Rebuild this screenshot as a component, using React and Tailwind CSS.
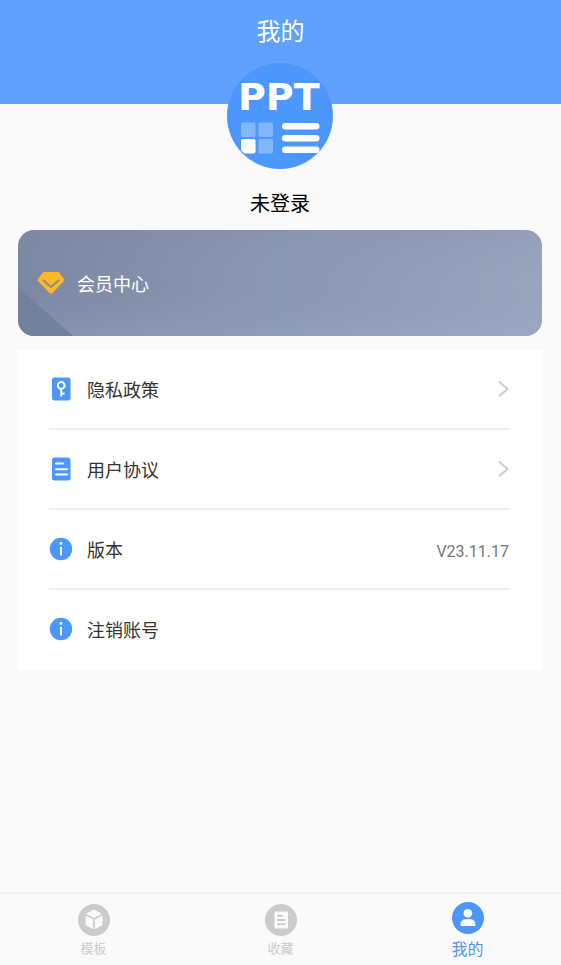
const menuItems = [
    { id: 'privacy', label: '隐私政策', icon: KeyIcon, arrow: true },
    { id: 'agreement', label: '用户协议', icon: DocIcon, arrow: true },
    { id: 'version', label: '版本', icon: InfoIcon, value: 'V23.11.17' },
    { id: 'cancel', label: '注销账号', icon: InfoIcon },
];

const tabs = [
    { id: 'template', label: '模板', icon: CubeIcon },
    { id: 'favorite', label: '收藏', icon: ListIcon },
    { id: 'mine', label: '我的', icon: UserIcon, active: true },
];

function AvatarLogo() {
    return (
        <svg className="w-[106px] h-[106px]" viewBox="0 0 106 106" fill="#fff" role="img" aria-label="PPT">
            <circle cx="53" cy="53" r="53" fill="#4c97fe" />
            <text x="11" y="47" fontSize="38" fontWeight="700" fontFamily="'DejaVu Sans', sans-serif">PPT</text>
            <rect x="14" y="59.500" width="14.500" height="14.500" rx="2" opacity=".3" />
            <rect x="31.500" y="59.500" width="14.500" height="14.500" rx="2" opacity=".3" />
            <path d="M16 76h10.500a2 2 0 0 1 2 2v10.500a2 2 0 0 1-2 2H17.500L14 87.500V78a2 2 0 0 1 2-2z" />
            <rect x="31.500" y="76" width="14.500" height="14.500" rx="2" opacity=".3" />
            <rect x="55" y="60" width="37.500" height="6.500" rx="3.250" />
            <rect x="55" y="72" width="37.500" height="6.500" rx="3.250" />
            <rect x="55" y="83.500" width="37.500" height="6.500" rx="3.250" />
        </svg>
    );
}

function DiamondIcon() {
    return (
        <svg className="w-[26px] h-[22px]" viewBox="0 0 26 22" fill="none" aria-hidden="true">
            <path d="M6.500 2.500h13l4 5.500L13 19 2.500 8z" fill="#fdb827" stroke="#fdb827" strokeWidth="5" strokeLinejoin="round" />
            <path d="M5.500 8.500l7.500 6.500 7.500-6.500" stroke="#8c8c8a" strokeWidth="2" strokeLinecap="round" strokeLinejoin="round" />
        </svg>
    );
}

function KeyIcon() {
    return (
        <svg className="w-6 h-6" viewBox="0 0 24 24" fill="none" stroke="#fff" aria-hidden="true">
            <rect x="3" y=".5" width="18.500" height="23" rx="2.500" fill="#4c97fe" stroke="none" />
            <circle cx="12.200" cy="8.500" r="3.400" strokeWidth="2" />
            <path d="M12.200 12v7.500M12.200 16.500h3.400" strokeWidth="2" />
        </svg>
    );
}

function DocIcon() {
    return (
        <svg className="w-6 h-6" viewBox="0 0 24 24" fill="none" aria-hidden="true">
            <rect x="3" y=".5" width="18.500" height="23" rx="2.500" fill="#4c97fe" />
            <path d="M7 6.500h7M7 12.200h11M7 17.500h11" stroke="#fff" strokeWidth="2" strokeLinecap="round" />
        </svg>
    );
}

function InfoIcon() {
    return (
        <svg className="w-6 h-6" viewBox="0 0 24 24" fill="none" aria-hidden="true">
            <circle cx="12" cy="12" r="11.200" fill="#4c97fe" />
            <circle cx="12" cy="6.500" r="1.400" fill="#fff" />
            <path d="M12 9.800v8.700" stroke="#fff" strokeWidth="2" />
        </svg>
    );
}

function ChevronIcon() {
    return (
        <svg className="w-[11px] h-[18px]" viewBox="0 0 11 18" fill="none" stroke="#cbcbcb" strokeWidth="1.800" aria-hidden="true">
            <path d="M1 1.500l8.500 7.500L1 16.500" />
        </svg>
    );
}

function CubeIcon() {
    return (
        <svg className="w-8 h-8" viewBox="0 0 32 32" aria-hidden="true">
            <circle cx="16" cy="16" r="16" fill="#cbcbcb" />
            <g fill="#fafafa">
                <path d="M16 5.500l8 4.200-8 4.300-8-4.300z" />
                <path d="M7.500 11.500l7.700 4v9.800l-7.700-4.200z" />
                <path d="M24.500 11.500l-7.700 4v9.800l7.700-4.200z" />
            </g>
        </svg>
    );
}

function ListIcon() {
    return (
        <svg className="w-8 h-8" viewBox="0 0 32 32" aria-hidden="true">
            <circle cx="16" cy="16" r="16" fill="#cbcbcb" />
            <rect x="9.500" y="7.500" width="13.500" height="17" rx="1" fill="#fafafa" />
            <path d="M12 11.800h6M12 16h8.500M12 20.200h8.500" stroke="#cbcbcb" strokeWidth="1.800" />
        </svg>
    );
}

function UserIcon() {
    return (
        <svg className="w-8 h-8" viewBox="0 0 32 32" aria-hidden="true">
            <circle cx="16" cy="16" r="16" fill="#4c97fe" />
            <circle cx="15.800" cy="11.300" r="4.300" fill="#fff" />
            <path d="M8.500 24v-1.800c0-3 2.300-5 5-5h4.800c2.700 0 5 2 5 5V24z" fill="#fff" />
        </svg>
    );
}

export default function App() {
    return (
        <div className="min-h-screen flex flex-col bg-[#fafafa] font-['Noto_Sans_CJK_SC',sans-serif]">
            {/* Header */}
            <header className="h-[104px] pt-3 bg-[#60a1fe] text-center">
                <h1 className="text-2xl leading-9 text-white">我的</h1>
            </header>

            <main className="flex-1 pl-[18px] pr-[19px] pb-6">
                {/* Profile */}
                <div className="relative -mt-[41px] flex flex-col items-center">
                    <AvatarLogo />
                    <p className="mt-5 text-xl leading-7 text-black">未登录</p>
                </div>

                {/* Member center */}
                <button className="relative mt-[13px] w-full h-[106px] pl-5 flex items-center rounded-2xl overflow-hidden bg-linear-to-r from-[#7c88a2] via-[#8b98b1] to-[#99a5be]">
                    <svg className="absolute inset-0 w-full h-full" viewBox="0 0 524 106" preserveAspectRatio="none" aria-hidden="true">
                        <defs>
                            <linearGradient id="shade" x1="0" y1="0" x2="0" y2="1">
                                <stop offset="0" stopColor="#7787a1" stopOpacity=".2" />
                                <stop offset=".5" stopColor="#8b98b1" stopOpacity="0" />
                                <stop offset="1" stopColor="#a3b0cb" stopOpacity=".25" />
                            </linearGradient>
                        </defs>
                        <path d="M0 0h524v106H0z" fill="url(#shade)" />
                        <path d="M0 57l55 49H0z" fill="#72819c" />
                    </svg>
                    <span className="relative flex items-center gap-[13px]">
                        <DiamondIcon />
                        <span className="text-lg text-white">会员中心</span>
                    </span>
                </button>

                {/* Menu */}
                <ul className="mt-3.5 pl-[31px] pr-[33px] bg-white">
                    {menuItems.map((item) => (
                        <li key={item.id} className="h-20 border-b-2 border-[#eeeeee] last:border-transparent">
                            <button className="w-full h-full flex items-center gap-3.5 text-left">
                                <item.icon />
                                <span className="flex-1 flex items-baseline justify-between">
                                    <span className="text-lg text-[#333333]">{item.label}</span>
                                    {item.value && <span className="font-['Roboto',sans-serif] text-base text-[#777777]">{item.value}</span>}
                                </span>
                                {item.arrow && <ChevronIcon />}
                            </button>
                        </li>
                    ))}
                </ul>
            </main>

            {/* Tab bar */}
            <nav className="h-[73px] grid grid-cols-3 border-t-2 border-[#f1f1f1]">
                {tabs.map((tab) => (
                    <a
                        key={tab.id}
                        href={`#${tab.id}`}
                        className={`flex flex-col items-center gap-0.5 ${tab.active ? 'pt-2 text-base leading-6 text-[#4c97fe]' : 'pt-2.5 text-[13px] leading-5 text-[#cbcbcb]'}`}
                    >
                        <tab.icon />
                        <span>{tab.label}</span>
                    </a>
                ))}
            </nav>
        </div>
    );
}
